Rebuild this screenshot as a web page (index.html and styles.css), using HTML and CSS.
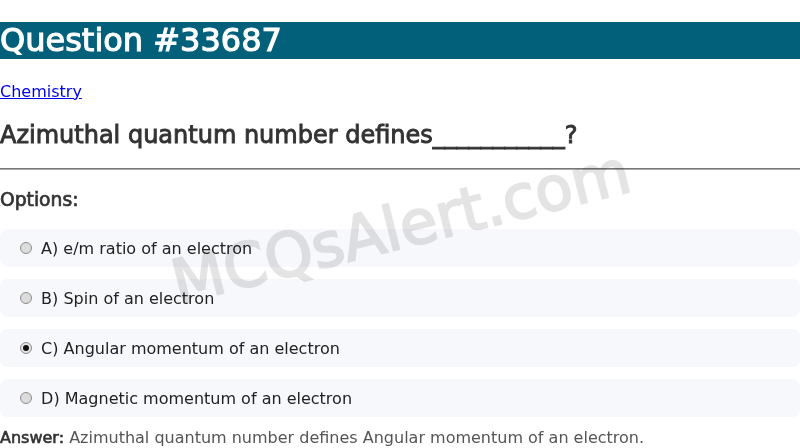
FILE: index.html
```html
<!DOCTYPE html>
<html>
<head>
<meta charset="utf-8">
<link rel="stylesheet" href="styles.css">
</head>
<body>
<div class="page">
  <h1 class="title">Question #33687</h1>
  <div class="cat"><a href="#">Chemistry</a></div>
  <h2 class="question">Azimuthal quantum number defines___________?</h2>
  <hr class="rule">
  <h3 class="opts-title">Options:</h3>
  <div class="options">
    <label class="option"><span class="radio"></span> A) e/m ratio of an electron</label>
    <label class="option"><span class="radio"></span> B) Spin of an electron</label>
    <label class="option"><span class="radio checked"></span> C) Angular momentum of an electron</label>
    <label class="option"><span class="radio"></span> D) Magnetic momentum of an electron</label>
  </div>
  <p class="answer"><b>Answer:</b> Azimuthal quantum number defines Angular momentum of an electron.</p>
  <div class="watermark">MCQsAlert.com</div>
</div>
</body>
</html>
```
FILE: styles.css
```css
html, body {
  margin: 0;
  padding: 0;
  background: #fff;
}
body {
  font-family: "DejaVu Sans", sans-serif;
  color: #333;
  overflow: hidden;
}
.page {
  position: relative;
}
.title {
  margin: 22px 0 22.5px;
  font-size: 32px;
  font-weight: normal;
  -webkit-text-stroke: 1.1px #fff;
  background: #02607a;
  color: #fff;
  line-height: 37px;
}
.cat {
  font-size: 16px;
  line-height: 19px;
}
.cat a {
  color: #0000ee;
}
.question {
  font-size: 24px;
  font-weight: normal;
  -webkit-text-stroke: 0.9px #333;
  margin: 20px 0 19px;
  line-height: 28px;
  color: #333;
}
.rule {
  margin: 8px 0;
  border: 0;
  border-top: 1px solid #777;
  border-bottom: 1px solid #aaa;
}
.opts-title {
  font-size: 18.72px;
  font-weight: normal;
  -webkit-text-stroke: 0.7px #333;
  margin: 19px 0 18.5px;
  line-height: 22px;
  color: #333;
}
.options {
  display: flex;
  flex-direction: column;
  gap: 12px;
}
.option {
  display: flex;
  align-items: center;
  height: 38px;
  box-sizing: border-box;
  background: #f7f8fc;
  border-radius: 8px;
  padding: 1px 15px 0 20px;
  font-size: 16px;
  color: #222;
  white-space: pre;
}
.radio {
  width: 10px;
  height: 10px;
  border: 1px solid #8d8d8d;
  border-radius: 50%;
  background: #dcdcdc;
  margin-right: 4px;
  margin-top: -2px;
  position: relative;
}
.radio.checked {
  background: #e4e4e4;
}
.radio.checked::after {
  content: "";
  position: absolute;
  left: 2px;
  top: 2px;
  width: 6px;
  height: 6px;
  border-radius: 50%;
  background: #111;
}
.answer {
  margin: 11px 0 0;
  font-size: 16px;
  line-height: 19px;
  color: #555;
}
.answer b {
  font-weight: normal;
  -webkit-text-stroke: 0.6px #333;
  color: #333;
}
.watermark {
  position: absolute;
  left: 166px;
  top: 170px;
  font-size: 61px;
  line-height: 70px;
  color: #e4e4e4;
  -webkit-text-stroke: 2px #e4e4e4;
  mix-blend-mode: multiply;
  transform: rotate(-14deg);
  pointer-events: none;
  white-space: nowrap;
}
```
